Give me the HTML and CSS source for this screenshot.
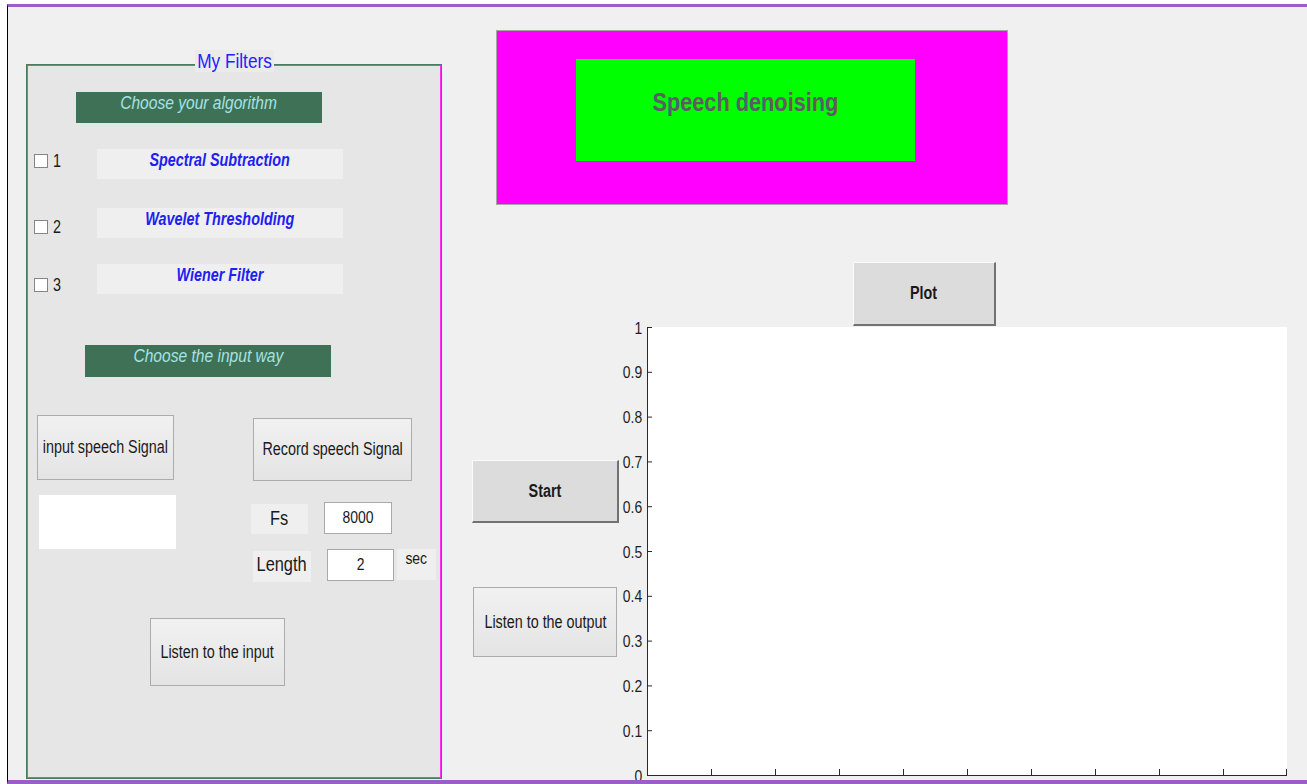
FILE: index.html
```html
<!DOCTYPE html>
<html lang="en">
<head>
<meta charset="utf-8">
<title>Speech denoising</title>
<link rel="stylesheet" href="styles.css">
</head>
<body>
<div class="window">
  <div class="side">
    <div class="panel">
      <div class="legend"><span class="sq">My Filters</span></div>
      <div class="header header-algo"><span class="sq">Choose your algorithm</span></div>

      <div class="algo-row row-1">
        <div class="check-group"><span class="check"></span><span class="check-num">1</span></div>
        <div class="algo-label"><span class="sq">Spectral Subtraction</span></div>
      </div>
      <div class="algo-row row-2">
        <div class="check-group"><span class="check"></span><span class="check-num">2</span></div>
        <div class="algo-label"><span class="sq">Wavelet Thresholding</span></div>
      </div>
      <div class="algo-row row-3">
        <div class="check-group"><span class="check"></span><span class="check-num">3</span></div>
        <div class="algo-label"><span class="sq">Wiener Filter</span></div>
      </div>

      <div class="header header-input"><span class="sq">Choose the input way</span></div>

      <div class="input-grid">
        <div class="col-left">
          <button class="btn flat btn-input"><span class="sq">input speech Signal</span></button>
          <div class="file-box"></div>
        </div>
        <div class="col-right">
          <button class="btn flat btn-record"><span class="sq">Record speech Signal</span></button>
          <div class="param-row fs-row">
            <div class="param-label fs-label"><span class="sq">Fs</span></div>
            <div class="param-field fs-field"><span class="sq">8000</span></div>
          </div>
          <div class="param-row len-row">
            <div class="param-label len-label"><span class="sq">Length</span></div>
            <div class="param-field len-field"><span class="sq">2</span></div>
            <div class="unit"><span class="sq">sec</span></div>
          </div>
        </div>
      </div>

      <button class="btn flat btn-listen-in"><span class="sq">Listen to the input</span></button>
    </div>
  </div>

  <div class="main">
    <div class="banner">
      <div class="title-box"><span class="sq">Speech denoising</span></div>
    </div>

    <button class="btn raised btn-plot"><span class="sq">Plot</span></button>

    <div class="lower">
      <div class="actions">
        <button class="btn raised btn-start"><span class="sq">Start</span></button>
        <button class="btn flat btn-listen-out"><span class="sq">Listen to the output</span></button>
      </div>

      <svg class="axes" width="688" height="453" viewBox="0 0 688 453">
        <rect x="28" y="1" width="640" height="448" fill="#ffffff"/>
        <g class="ticks" stroke="#2a2a2a" stroke-width="1">
          <line x1="28.5" y1="1" x2="28.5" y2="449.5"/>
          <line x1="28" y1="449.5" x2="668" y2="449.5"/>
          <line x1="28" y1="1.5" x2="33" y2="1.5"/>
          <line x1="28" y1="46.3" x2="33" y2="46.3"/>
          <line x1="28" y1="91.1" x2="33" y2="91.1"/>
          <line x1="28" y1="135.9" x2="33" y2="135.9"/>
          <line x1="28" y1="180.7" x2="33" y2="180.7"/>
          <line x1="28" y1="225.5" x2="33" y2="225.5"/>
          <line x1="28" y1="270.3" x2="33" y2="270.3"/>
          <line x1="28" y1="315.1" x2="33" y2="315.1"/>
          <line x1="28" y1="359.9" x2="33" y2="359.9"/>
          <line x1="28" y1="404.7" x2="33" y2="404.7"/>
          <line x1="92.5" y1="443" x2="92.5" y2="449"/>
          <line x1="156.5" y1="443" x2="156.5" y2="449"/>
          <line x1="220.5" y1="443" x2="220.5" y2="449"/>
          <line x1="284.5" y1="443" x2="284.5" y2="449"/>
          <line x1="348.5" y1="443" x2="348.5" y2="449"/>
          <line x1="412.5" y1="443" x2="412.5" y2="449"/>
          <line x1="476.5" y1="443" x2="476.5" y2="449"/>
          <line x1="540.5" y1="443" x2="540.5" y2="449"/>
          <line x1="604.5" y1="443" x2="604.5" y2="449"/>
          <line x1="667.5" y1="443" x2="667.5" y2="449"/>
        </g>
        <!-- labels drawn in a horizontally condensed group; x values are divided by 0.82 -->
        <g class="tick-labels" text-anchor="end" transform="scale(0.82 1)">
          <text x="28.3" y="1.5">1</text>
          <text x="28.3" y="46.3">0.9</text>
          <text x="28.3" y="91.1">0.8</text>
          <text x="28.3" y="135.9">0.7</text>
          <text x="28.3" y="180.7">0.6</text>
          <text x="28.3" y="225.5">0.5</text>
          <text x="28.3" y="270.3">0.4</text>
          <text x="28.3" y="315.1">0.3</text>
          <text x="28.3" y="359.9">0.2</text>
          <text x="28.3" y="404.7">0.1</text>
          <text x="28.3" y="449.5">0</text>
        </g>
      </svg>
    </div>
  </div>
</div>
</body>
</html>
```

FILE: styles.css
```css
* {
  box-sizing: border-box;
}

html, body {
  margin: 0;
  padding: 0;
  background: #ffffff;
  width: 1307px;
  height: 784px;
  overflow: hidden;
}

body {
  font-family: "Liberation Sans", Arial, sans-serif;
  color: #1a1a1a;
}

/* condensed text run, the UI font is drawn narrow */
.sq {
  display: inline-block;
  white-space: nowrap;
  transform: scaleX(0.82);
}

/* figure window */
.window {
  margin: 4px 0 0 7px;
  width: 1310px;
  height: 780px;
  background: #f0f0f0;
  border-top: 3px solid #9a5ec9;
  border-left: 1px solid #000000;
  border-bottom: 4px solid #9a5ec9;
  display: flex;
  overflow: hidden;
}

.side {
  width: 434px;
  flex: none;
}

/* "My Filters" panel */
.panel {
  margin: 57px 0 0 18px;
  width: 416px;
  height: 715px;
  background: #e6e6e6;
  border: 1px solid #4b7b5d;
  box-shadow: inset 0 0 0 1px #ff2cf5;
}

.legend {
  width: 79px;
  margin: -15px auto 0;
  height: 22px;
  background: #ebebeb;
  color: #2222ff;
  font-size: 21px;
  line-height: 22px;
  display: flex;
  justify-content: center;
}

.header {
  width: 246px;
  background: #3e7156;
  color: #a6e2e2;
  font-style: italic;
  font-size: 19px;
  line-height: 20px;
  padding-top: 1px;
  display: flex;
  justify-content: center;
  align-items: flex-start;
}

.header-algo {
  margin: 20px 0 0 49px;
  height: 31px;
}

.header-input {
  margin: 51px 0 0 58px;
  height: 32px;
}

.algo-row {
  display: flex;
  align-items: flex-start;
}

.row-1 { margin-top: 26px; }
.row-2 { margin-top: 29px; }
.row-3 { margin-top: 26px; }

.check-group {
  width: 70px;
  flex: none;
  display: flex;
  align-items: center;
  padding-left: 7px;
}

.row-1 .check-group { margin-top: 4px; }
.row-2 .check-group { margin-top: 11px; }
.row-3 .check-group { margin-top: 13px; }

.check {
  width: 14px;
  height: 14px;
  background: #ffffff;
  border: 1px solid #858585;
}

.check-num {
  display: inline-block;
  margin-left: 5px;
  font-size: 17.5px;
  line-height: 16px;
  transform: scaleX(0.82);
  transform-origin: left center;
}

.algo-label {
  width: 246px;
  height: 30px;
  background: #efefef;
  color: #2020f2;
  font-weight: bold;
  font-style: italic;
  font-size: 17.5px;
  line-height: 20px;
  padding-top: 1px;
  display: flex;
  justify-content: center;
  align-items: flex-start;
}

/* buttons */
.btn {
  padding: 0;
  font-family: inherit;
  font-size: 17.5px;
  color: #1a1a1a;
  display: flex;
  justify-content: center;
  align-items: center;
}

.flat {
  background: linear-gradient(#f1f1f1, #e4e4e4);
  border: 1px solid #acacac;
}

.raised {
  background: #dcdcdc;
  border-style: solid;
  border-width: 1px 2px 2px 1px;
  border-color: #fbfbfb #727272 #727272 #fbfbfb;
  font-weight: bold;
}

.input-grid {
  margin: 38px 0 0 10px;
  display: grid;
  grid-template-columns: 139px 185px;
  column-gap: 75px;
}

.btn-input {
  width: 137px;
  height: 65px;
}

.file-box {
  margin: 15px 0 0 2px;
  width: 137px;
  height: 54px;
  background: #ffffff;
}

.btn-record {
  margin: 3px 0 0 2px;
  width: 159px;
  height: 63px;
}

.param-row {
  display: flex;
  align-items: flex-start;
}

.fs-row { margin-top: 21px; }
.len-row { margin-top: 15px; }

.param-label {
  margin-top: 2px;
  background: #efefef;
  font-size: 20px;
  display: flex;
  justify-content: center;
  align-items: center;
}

.fs-label {
  width: 57px;
  height: 30px;
  padding-bottom: 2px;
}

.len-label {
  margin-left: 2px;
  width: 58px;
  height: 31px;
  padding-bottom: 4px;
}

.param-field {
  margin-left: 16px;
  height: 32px;
  background: #ffffff;
  border: 1px solid #a9a9a9;
  font-size: 17px;
  display: flex;
  justify-content: center;
  align-items: center;
}

.fs-field { width: 68px; }
.len-field { width: 67px; }

.unit {
  margin-left: 3px;
  width: 39px;
  height: 31px;
  background: #efefef;
  font-size: 17px;
  line-height: 20px;
  display: flex;
  justify-content: center;
  align-items: flex-start;
}

.btn-listen-in {
  margin: 36px 0 0 123px;
  width: 135px;
  height: 68px;
}

/* right-hand area */
.main {
  flex: 1;
  display: flex;
  flex-direction: column;
}

.banner {
  margin: 23px 0 0 54px;
  width: 512px;
  height: 175px;
  background: #ff00ff;
  border: 1px solid #a6a6a6;
  padding: 28px 0 0 79px;
}

.title-box {
  width: 339px;
  height: 102px;
  background: #00ff00;
  color: #5e5a66;
  font-weight: bold;
  font-size: 26.5px;
  line-height: 28px;
  padding-top: 29px;
  display: flex;
  justify-content: center;
  align-items: flex-start;
}

.btn-plot {
  margin: 57px 0 0 411px;
  width: 143px;
  height: 64px;
}

.lower {
  display: flex;
  align-items: flex-start;
}

.actions {
  margin-left: 30px;
  width: 147px;
  flex: none;
}

.btn-start {
  margin-top: 134px;
  width: 147px;
  height: 63px;
}

.btn-listen-out {
  margin: 64px 0 0 1px;
  width: 144px;
  height: 70px;
}

.axes {
  display: block;
  flex: none;
  overflow: visible;
}

.tick-labels text {
  font-family: "Liberation Sans", Arial, sans-serif;
  font-size: 17px;
  fill: #1e1e1e;
  dominant-baseline: central;
}
```
